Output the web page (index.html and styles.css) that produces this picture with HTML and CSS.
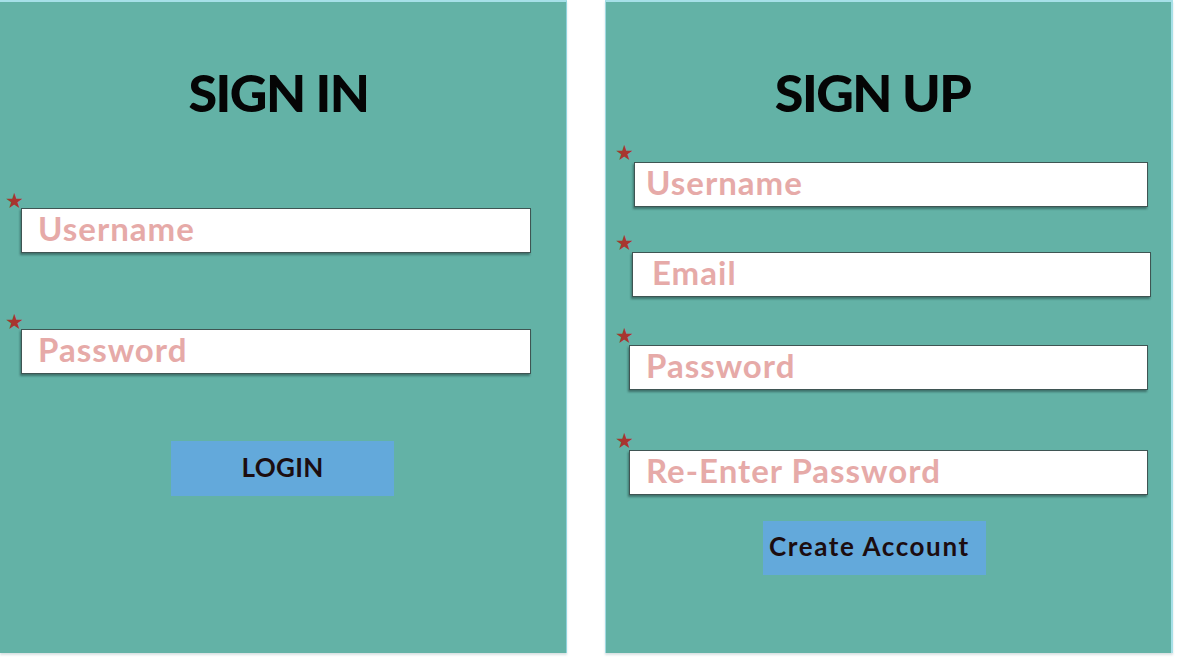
FILE: index.html
```html
<!DOCTYPE html>
<html>
<head>
<meta charset="utf-8">
<link rel="stylesheet" href="styles.css">
</head>
<body>
<div class="page">
  <section class="panel panel-left">
    <h1 class="title">SIGN IN</h1>
    <div class="field field-l1">
      <span class="star">★</span>
      <input class="box" type="text" placeholder="Username">
    </div>
    <div class="field field-l2">
      <span class="star">★</span>
      <input class="box" type="password" placeholder="Password">
    </div>
    <div class="btn-row btn-row-l">
      <button class="btn btn-login">LOGIN</button>
    </div>
  </section>
  <section class="panel panel-right">
    <h1 class="title">SIGN UP</h1>
    <div class="field rfield field-r1">
      <span class="star">★</span>
      <input class="box box-user" type="text" placeholder="Username">
    </div>
    <div class="field rfield field-r2">
      <span class="star">★</span>
      <input class="box box-email" type="text" placeholder="Email">
    </div>
    <div class="field rfield field-r3">
      <span class="star">★</span>
      <input class="box box-pass" type="password" placeholder="Password">
    </div>
    <div class="field rfield field-r4">
      <span class="star">★</span>
      <input class="box box-pass" type="password" placeholder="Re-Enter Password">
    </div>
    <div class="btn-row btn-row-r">
      <button class="btn btn-create">Create Account</button>
    </div>
  </section>
</div>
</body>
</html>
```

FILE: styles.css
```css
* { box-sizing: border-box; }
html, body { margin: 0; padding: 0; background: #ffffff; }
body {
  font-family: "Lato", "Noto Sans", sans-serif;
  width: 1178px;
  height: 658px;
  overflow: hidden;
}
.page {
  display: flex;
  gap: 38px;
  align-items: flex-start;
}
.panel {
  background: #63b2a6;
  height: 653px;
  border-top: 2px solid #a6e0e8;
  box-shadow: 0 2px 2px rgba(150, 170, 175, 0.35);
  display: flex;
  flex-direction: column;
}
.panel-left { width: 567px; border-right: 1px solid #8fd3dc; }
.panel-right { width: 568px; border-right: 2px solid #a6e0e8; border-left: 1px solid #9fd8e0; }
.title {
  margin: 60px 0 0;
  font-size: 52px;
  line-height: 60px;
  font-weight: 900;
  color: #050505;
  text-align: center;
  letter-spacing: -1.5px;
}
.panel-left .title { padding-right: 9px; }
.panel-right .title { padding-right: 32px; }

.field {
  display: flex;
  flex-direction: column;
  align-items: flex-start;
  padding-left: 5px;
}
.star {
  display: block;
  height: 15px;
  line-height: 14px;
  font-size: 21px;
  color: #a8352f;
}
.box {
  display: block;
  width: 510px;
  height: 45px;
  margin-left: 16px;
  border: 1px solid #3f5553;
  background: #ffffff;
  box-shadow: -1px 2px 2px rgba(20, 40, 40, 0.45);
  padding: 0 0 6px 16px;
  font-family: "Lato", "Noto Sans", sans-serif;
  font-size: 33px;
  font-weight: 700;
  letter-spacing: 1px;
  color: #e6aaa8;
  outline: none;
}
.box::placeholder { color: #e6aaa8; opacity: 1; }

.field-l1 { margin-top: 71px; }
.field-l2 { margin-top: 61px; }

.rfield { padding-left: 9px; }
.rfield .star { height: 17px; }
.field-r1 { margin-top: 23px; }
.field-r2 { margin-top: 28px; }
.field-r3 { margin-top: 31px; }
.field-r4 { margin-top: 43px; }
.rfield .box { margin-left: 14px; width: 519px; padding-left: 16px; }
.rfield .box-user { margin-left: 19px; width: 514px; padding-left: 11px; }
.rfield .box-email { margin-left: 17px; width: 519px; padding-left: 19px; }

.btn-row { display: flex; }
.btn-row-l { margin-top: 67px; padding-left: 171px; }
.btn-row-r { margin-top: 26px; padding-left: 157px; }
.btn {
  border: none;
  background: #63a9db;
  color: #1c0d10;
  font-family: "Lato", "Noto Sans", sans-serif;
  font-weight: 700;
  cursor: pointer;
}
.btn-login {
  width: 223px;
  height: 55px;
  font-size: 26px;
  padding: 0 0 4px 0;
  letter-spacing: 0.3px;
}
.btn-create {
  width: 223px;
  height: 54px;
  font-size: 26px;
  padding: 0 0 4px 6px;
  text-align: left;
  letter-spacing: 1.6px;
}
```
